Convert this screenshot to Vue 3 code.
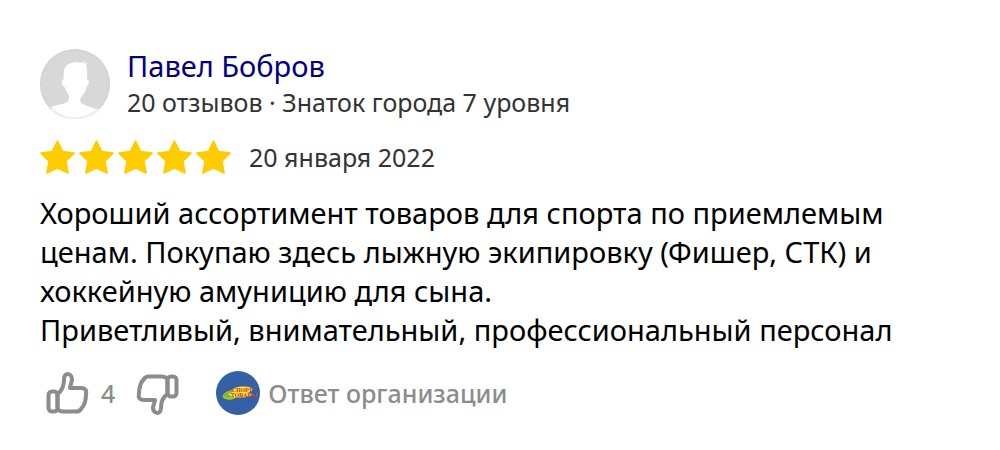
<script setup>
import { ref } from 'vue'

const rating = 5
const likes = ref(4)
</script>

<template>
  <article class="review">
    <header class="author">
      <svg class="avatar" viewBox="0 0 70 70" role="img" aria-label="Павел Бобров">
        <defs>
          <clipPath id="avatar-clip"><circle cx="35" cy="35" r="34" /></clipPath>
        </defs>
        <circle cx="35" cy="35" r="35" fill="#d0d0d0" />
        <g clip-path="url(#avatar-clip)">
          <circle cx="35" cy="35" r="34" fill="#d8d8d8" />
          <path fill="#fff" d="M8 60C13 56 20 56 25 54C29 53 29 51 29 46C27 43 25 41 24.500 38C21 36 21 31 23.500 30.500C24 26 23 22 25.500 18C28 14 32 14 36 13C40 14 42 14 46 12L43.500 15L48 14L46 17C48 20 47 25 47 30.500C50 31 49 36 46.500 38C46 42 44 45 41 48L40 51C40 54 43 55 47 57C52 58 54 59 58 62V70H8Z" />
        </g>
        <path d="M11.500 60A34 34 0 0 0 58.500 60" fill="none" stroke="#f0f0f0" stroke-width="3" />
      </svg>
      <div class="author-info">
        <a class="name" href="#">Павел Бобров</a>
        <div class="level">20 отзывов · Знаток города 7 уровня</div>
      </div>
    </header>

    <div class="meta">
      <div class="stars" role="img" aria-label="Оценка 5 из 5">
        <svg v-for="n in rating" :key="n" viewBox="0 0 35 34">
          <path d="M17.500 1.200L22.600 11.500L34 13.100L25.900 21.300L28.100 33L17.500 28.100L6.900 33L9.100 21.300L1 13.100L12.400 11.500Z" fill="#fc0" stroke="#fc0" stroke-width="1.600" stroke-linejoin="round" />
        </svg>
      </div>
      <time datetime="2022-01-20">20 января 2022</time>
    </div>

    <p class="text">Хороший ассортимент товаров для спорта по приемлемым ценам. Покупаю здесь лыжную экипировку (Фишер, СТК) и хоккейную амуницию для сына.<br>Приветливый, внимательный, профессиональный персонал</p>

    <footer class="actions">
      <button class="vote" type="button" aria-label="Нравится">
        <svg viewBox="0 0 44 44">
          <rect x="3.500" y="20.500" width="9" height="20" rx="3.500" />
          <path d="M12.500 23C17 20 19 15 19 8C19 1 27 2 27 8C27 12 25 14 25 17H36C40 17 42 19 41 23C41 30 40 34 36 38C35 40 33 40.500 31 40.500H18C15 40.500 12.500 39 12.500 36Z" />
        </svg>
      </button>
      <span class="count">{{ likes }}</span>
      <button class="vote" type="button" aria-label="Не нравится">
        <svg viewBox="0 0 44 44">
          <rect x="31.500" y="5.500" width="9" height="20" rx="3.500" />
          <path d="M31.500 23C27 26 25 31 25 37C25 44 17 43 17 37C17 34 19 32 19 29H8C4 29 2 27 3 23C3 16 4 12 8 8C9 6 11 5.500 13 5.500H26C29 5.500 31.500 7 31.500 10Z" />
        </svg>
      </button>
      <button class="reply" type="button">
        <svg class="logo" viewBox="0 0 44 44" aria-hidden="true">
          <circle cx="22" cy="22" r="22" fill="#3560a5" />
          <ellipse cx="15" cy="24" rx="8.500" ry="4.500" fill="#a2c62f" transform="rotate(-12 15 24)" />
          <ellipse cx="26" cy="19" rx="10.500" ry="3.500" fill="#f4e735" transform="rotate(-4 26 19)" />
          <ellipse cx="24" cy="23.500" rx="12" ry="3" fill="#f4e735" />
          <path d="M8 25C12 22 14 20 17 20M10 27C13 25 14 23 16 22M8 23L16 26" fill="none" stroke="#679b3a" stroke-width="0.700" />
          <text x="16" y="21">СПОРТ</text>
          <text x="15" y="26">ТОВАРЫ</text>
        </svg>
        <span>Ответ организации</span>
      </button>
    </footer>
  </article>
</template>

<style>
body {
  margin: 0;
  background: #fff;
}
</style>

<style scoped>
.review {
  padding: 48px 40px 32px;
  font-family: "Noto Sans", "Open Sans", sans-serif;
  color: #000;
}
.author {
  display: flex;
  align-items: center;
  gap: 17px;
}
.avatar {
  width: 70px;
  height: 70px;
  flex: none;
}
.name {
  display: block;
  font-size: 29px;
  line-height: 36px;
  color: #000080;
  text-decoration: none;
}
.level {
  font-size: 25px;
  line-height: 36px;
  color: #333;
}
.meta {
  display: flex;
  align-items: center;
  gap: 18px;
  margin-top: 20px;
}
.stars {
  display: flex;
  gap: 4px;
}
.stars svg {
  width: 35px;
  height: 34px;
}
time {
  font-size: 25px;
  line-height: 34px;
  color: #333;
}
.text {
  margin: 19px 0 22px;
  font-size: 29px;
  line-height: 39px;
}
.actions {
  display: flex;
  align-items: center;
  color: #8c8c8c;
  font-size: 25px;
  line-height: 36px;
  font-weight: 500;
}
button {
  padding: 0;
  border: 0;
  background: none;
  color: inherit;
  font: inherit;
  cursor: pointer;
}
.vote {
  display: flex;
  margin-left: 5px;
}
.vote svg {
  width: 44px;
  height: 44px;
  fill: none;
  stroke: #8c8c8c;
  stroke-width: 4;
  stroke-linejoin: round;
}
.count {
  margin: 0 16px 0 12px;
}
.reply {
  display: flex;
  align-items: center;
  gap: 8px;
  margin-left: 36px;
}
.logo {
  width: 44px;
  height: 44px;
}
.logo text {
  font: bold 5px "DejaVu Serif", serif;
  fill: #d32f35;
}
</style>
